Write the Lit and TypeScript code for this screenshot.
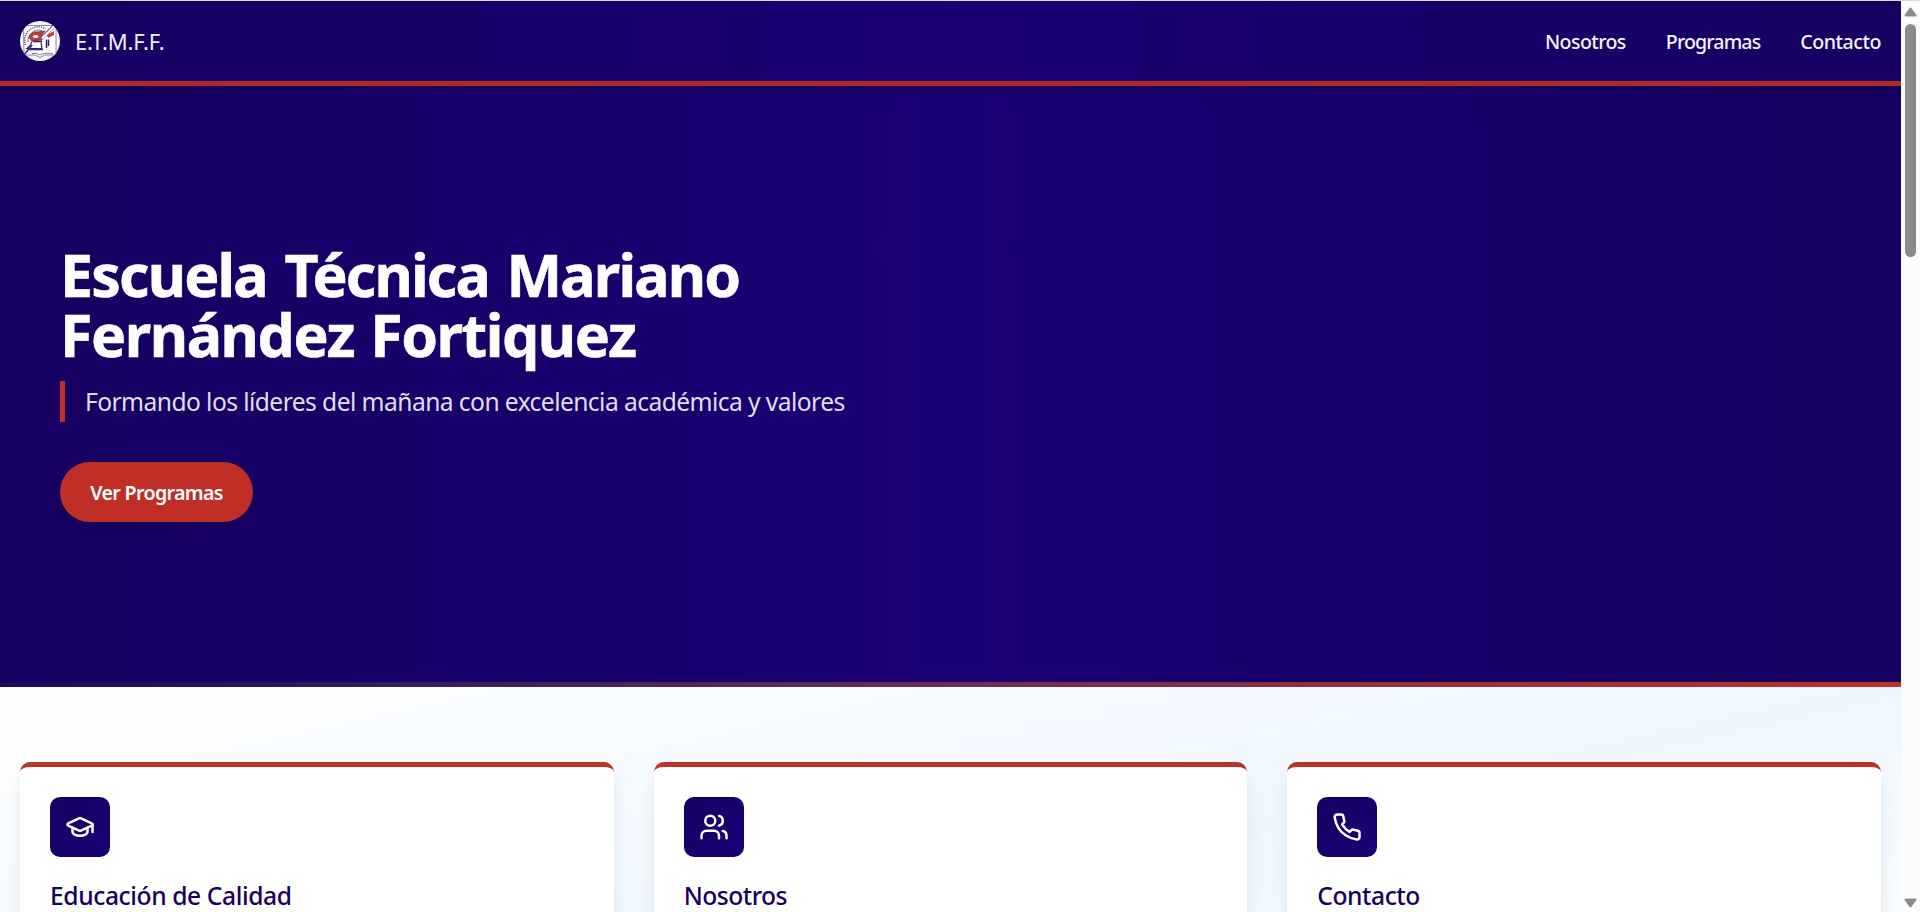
import { LitElement, html, css, svg } from "lit";
import { customElement } from "lit/decorators.js";

const icons = {
  cap: svg`<path d="M21.42 10.922a1 1 0 0 0-.019-1.838L12.83 5.18a2 2 0 0 0-1.66 0L2.6 9.08a1 1 0 0 0 0 1.832l8.57 3.908a2 2 0 0 0 1.66 0z"/><path d="M22 10v6"/><path d="M6 12.5V16a6 3 0 0 0 12 0v-3.5"/>`,
  users: svg`<path d="M16 21v-2a4 4 0 0 0-4-4H6a4 4 0 0 0-4 4v2"/><circle cx="9" cy="7" r="4"/><path d="M22 21v-2a4 4 0 0 0-3-3.87"/><path d="M16 3.13a4 4 0 0 1 0 7.75"/>`,
  phone: svg`<path d="M22 16.92v3a2 2 0 0 1-2.18 2 19.79 19.79 0 0 1-8.63-3.07 19.5 19.5 0 0 1-6-6 19.79 19.79 0 0 1-3.07-8.67A2 2 0 0 1 4.11 2h3a2 2 0 0 1 2 1.72 12.84 12.84 0 0 0 .7 2.81 2 2 0 0 1-.45 2.11L8.09 9.91a16 16 0 0 0 6 6l1.27-1.27a2 2 0 0 1 2.11-.45 12.84 12.84 0 0 0 2.81.7A2 2 0 0 1 22 16.92z"/>`,
};

const cards = [
  { icon: icons.cap, title: "Educación de Calidad", cls: "title-a" },
  { icon: icons.users, title: "Nosotros", cls: "title-b" },
  { icon: icons.phone, title: "Contacto", cls: "title-c" },
];

@customElement("app-root")
class AppRoot extends LitElement {
  static styles = css`
    :host { display: block; height: 912px; overflow: hidden; font-family: "Noto Sans", "Open Sans", sans-serif; }
    * { box-sizing: border-box; }
    .window { display: flex; height: 912px; border-top: 1px solid #e0dcea; background: #fcfcfc; }
    .page { flex: 1; min-width: 0; overflow: hidden; }
    header { position: relative; height: 85px; padding: 0 20px; display: flex; align-items: center; justify-content: space-between;
      border-bottom: 5px solid #b12925; color: #f3f2f8; background: linear-gradient(90deg, #160060, #1a0073 50%, #160060);
      box-shadow: 0 5px 8px -1px rgba(0,0,0,.1), 0 3px 5px -2px rgba(0,0,0,.1); }
    .brand { display: flex; align-items: center; gap: 15px; font-size: 22px; font-weight: 450; letter-spacing: -.18px; }
    .brand svg { width: 40px; height: 40px; display: block; }
    nav { display: flex; gap: 40px; font-size: 19.6px; font-weight: 480; }
    .n1 { letter-spacing: -.6px; }
    .n2 { letter-spacing: -.87px; }
    .n3 { letter-spacing: -.48px; }
    .hero { height: 601px; padding: 158px 60px 0; display: flex; flex-direction: column; align-items: flex-start; color: #fff;
      background: linear-gradient(90deg, #180862, #2f1c5c 18%, #6f3050 52%, #c03028) bottom / 100% 5px no-repeat, linear-gradient(90deg, #160060, #1a0075 50%, #160060); }
    h1 { margin: 0; font-size: 59px; font-weight: 700; line-height: 60px; white-space: nowrap; -webkit-text-stroke: .6px #fff; }
    h1 span { display: block; }
    .l1 { letter-spacing: -1.82px; word-spacing: 4px; }
    .l2 { letter-spacing: -1.42px; word-spacing: 2px; }
    .tagline { margin: 17px 0 0; padding-left: 20px; border-left: 5px solid #c03028; line-height: 41px; font-size: 24.6px; letter-spacing: -.565px; color: #e0dee9; }
    .cta { margin-top: 40px; width: 193px; height: 60px; border-radius: 30px; background: #bf2f28; text-align: center; line-height: 62px; font-size: 19.6px; font-weight: 620; letter-spacing: -.64px;
      box-shadow: 0 5px 8px -1px rgba(0,0,0,.1), 0 3px 5px -2px rgba(0,0,0,.1); }
    .features { height: 420px; padding: 75px 20px; display: grid; grid-template-columns: repeat(3, 1fr); gap: 40px;
      background: linear-gradient(to bottom right, #fff, #eef7ff, #fff); }
    .card { border-top: 5px solid #c03028; border-radius: 10px; padding: 30px; background: #fff;
      box-shadow: 0 12.5px 18.75px -3.75px rgba(0,0,0,.1), 0 5px 7.5px -5px rgba(0,0,0,.1); }
    .tile { width: 60px; height: 60px; border-radius: 10px; display: grid; place-items: center; background: linear-gradient(135deg, #160060, #1a0078); }
    .tile svg { width: 30px; height: 30px; fill: none; stroke: #fff; stroke-width: 2; stroke-linecap: round; stroke-linejoin: round; }
    h3 { margin: 21px 0 0; font-size: 24.6px; line-height: 35px; font-weight: 500; color: #180062; }
    .title-a { letter-spacing: -.39px; }
    .title-b { letter-spacing: -.5px; }
    .title-c { letter-spacing: -.45px; }
    .scroll { width: 19px; display: flex; flex-direction: column; align-items: center; background: #fcfcfc; }
    .scroll svg { width: 13px; height: 10px; fill: #8b8b8b; margin-top: 6px; flex: none; }
    .thumb { width: 11px; height: 233px; margin-top: 7px; border-radius: 6px; background: #8b8b8b; }
    .scroll svg.down { margin-top: auto; margin-bottom: 4px; }
  `;

  logo() {
    return html`<svg viewBox="0 0 40 40">
      <defs><clipPath id="disc"><circle cx="20" cy="20" r="20"/></clipPath></defs>
      <circle cx="20" cy="20" r="20" fill="#f5f5f8"/>
      <g clip-path="url(#disc)" fill="none" stroke="#30246e">
        <path d="M3.500 4.500H36V34H25L20 36.500 15 34H4Z" stroke-width=".8" stroke="#6f6997" fill="#fff"/>
        <path d="M5.500 24a13.500 13.500 0 0 1 20-16" stroke-width="1.600" stroke-dasharray="1.200 1" stroke="#6a6294"/>
        <path d="M8 21a11 11 0 0 1 14-11.500" stroke-width=".7"/>
        <path d="M9 16.500c1-4.500 5-6 9-5.500l7-1-4 5 1 4-10 1z" fill="#c83a34" stroke="#7c2444" stroke-width=".8"/>
        <path d="M12.500 15.500c2-2 5-2 6 0-1 2-4 2-6 0z" fill="#fff" stroke="none"/>
        <path d="M27 14l7-4v4l-6 3z" fill="#c83a34" stroke="none"/>
        <path d="M12 20.500c-1 3-2 5-5 7h15l-1-6" fill="#fff" stroke-width="1.200"/>
        <path d="M13 20.500h9" stroke-width="1.600"/>
        <path d="M26.500 18.500v8.500M28.500 18.500v6.500" stroke-width="1.500"/>
        <path d="M9 28.500h14" stroke-width="1.400"/>
        <path d="M34.500 4.500L21.500 17.500" stroke-width="3.800" stroke="#5b5288"/>
        <path d="M35 4.500L22 17.500" stroke-width="2.200" stroke="#fff"/>
        <path d="M12 24L4 34" stroke-width="1.800" stroke="#3b3075"/>
        <path d="M12 32.500q5-1 8 1.500q3-2.500 13-1.500" stroke-width=".9" stroke="#6f6997"/>
      </g>
    </svg>`;
  }

  render() {
    return html`<div class="window">
      <div class="page">
        <header>
          <div class="brand">${this.logo()}<span>E.T.M.F.F.</span></div>
          <nav><span class="n1">Nosotros</span><span class="n2">Programas</span><span class="n3">Contacto</span></nav>
        </header>
        <section class="hero">
          <h1><span class="l1">Escuela Técnica Mariano</span><span class="l2">Fernández Fortiquez</span></h1>
          <p class="tagline">Formando los líderes del mañana con excelencia académica y valores</p>
          <div class="cta">Ver Programas</div>
        </section>
        <section class="features">
          ${cards.map((c) => html`<article class="card">
            <div class="tile"><svg viewBox="0 0 24 24">${c.icon}</svg></div>
            <h3 class=${c.cls}>${c.title}</h3>
          </article>`)}
        </section>
      </div>
      <div class="scroll">
        <svg viewBox="0 0 13 10"><path d="M5.500 1.200q1-1.200 2 0L12.300 7.800q.7 1.700-1 1.700H1.700q-1.700 0-1-1.700z"/></svg>
        <div class="thumb"></div>
        <svg class="down" viewBox="0 0 13 10"><path d="M5.500 8.800q1 1.200 2 0L12.300 2.200q.7-1.700-1-1.700H1.700q-1.700 0-1 1.700z"/></svg>
      </div>
    </div>`;
  }
}
